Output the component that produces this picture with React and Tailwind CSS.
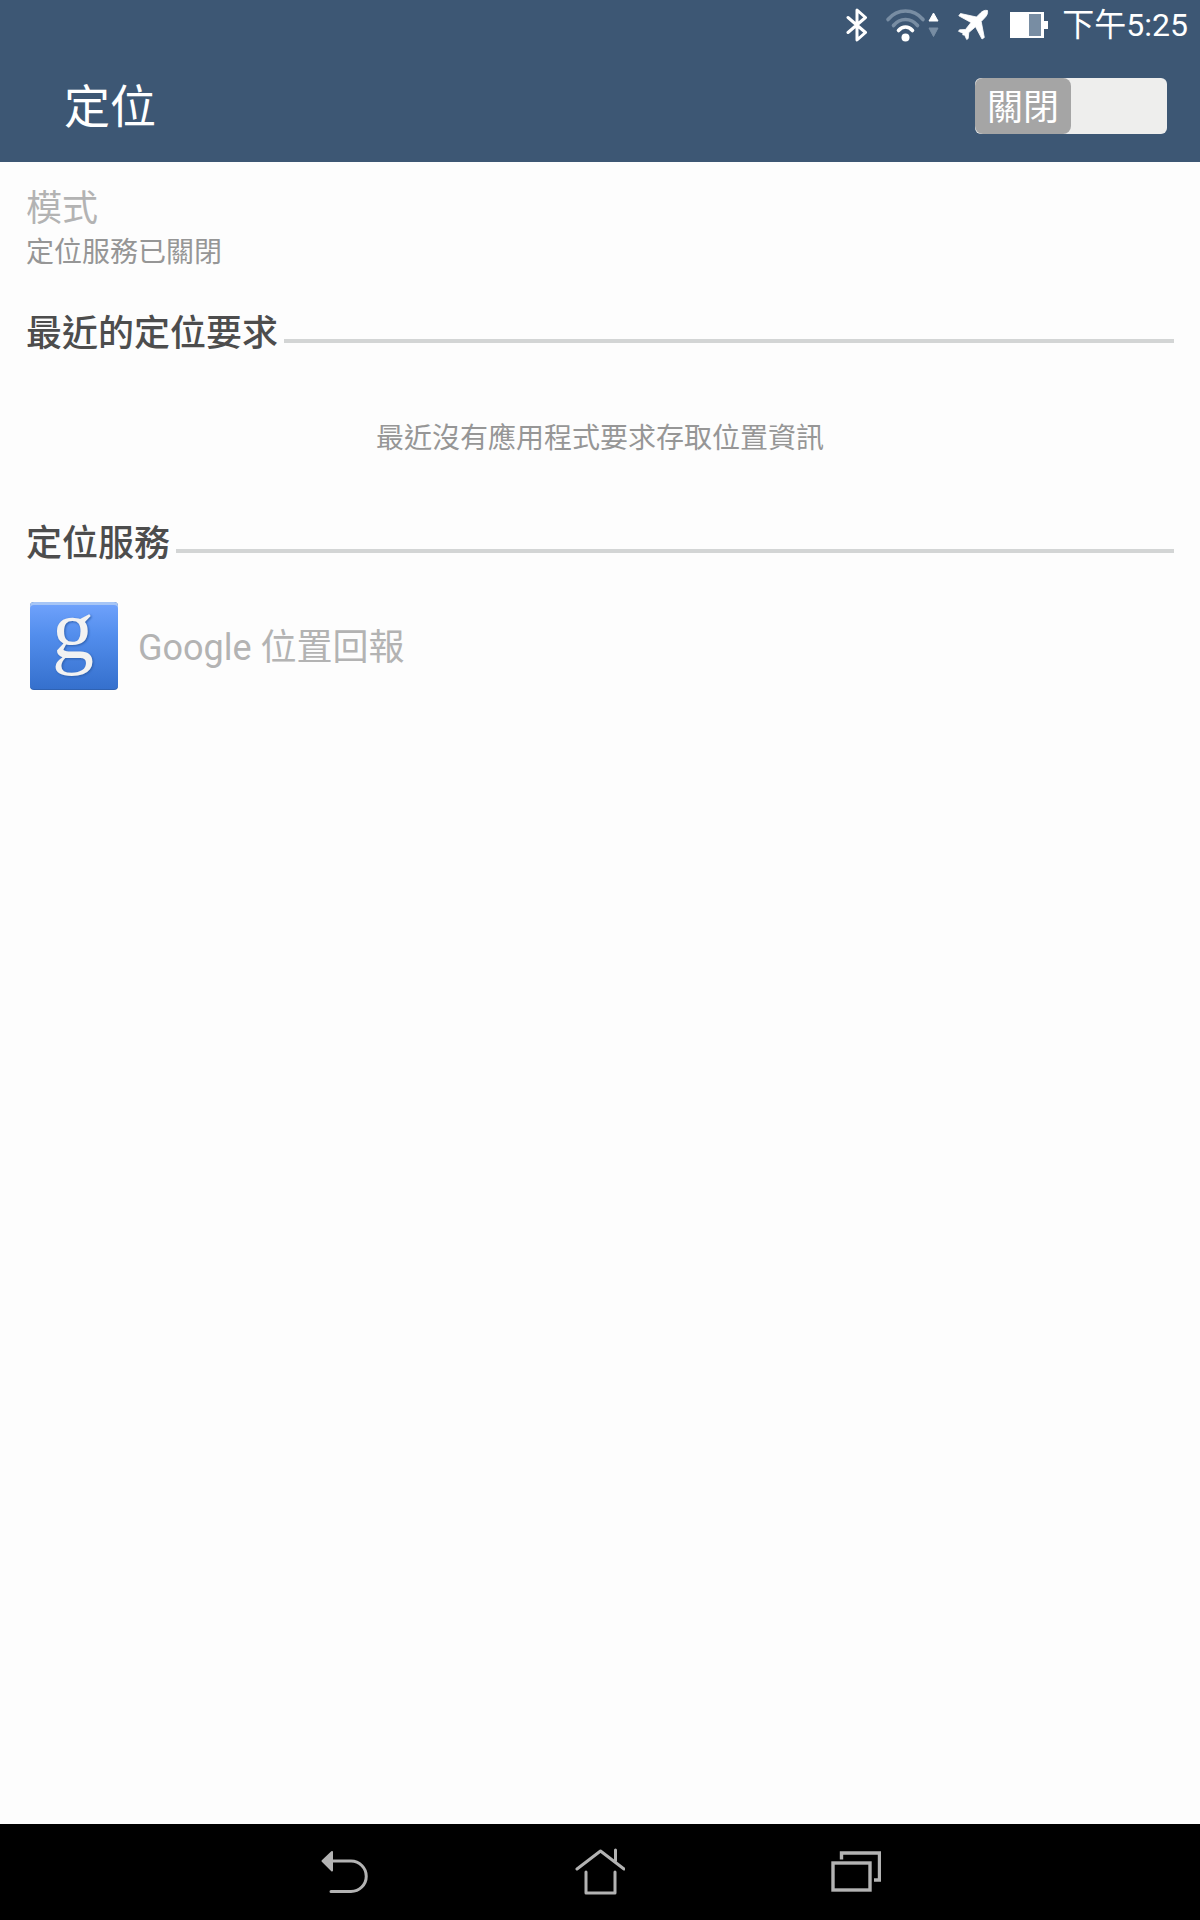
import React, { useState } from "react";

function BluetoothIcon() {
  return (
    <svg width="22" height="36" viewBox="0 0 22 36" fill="none" stroke="#fff" strokeWidth="3" strokeLinejoin="round" strokeLinecap="round" aria-hidden="true">
      <path d="M2 10.5 L19.5 25.5 L11 33 V3 L19.5 10.5 L2 25.5" />
    </svg>
  );
}

function WifiIcon() {
  return (
    <svg width="56" height="36" viewBox="0 0 56 36" fill="none" aria-hidden="true">
      <g strokeLinecap="round" strokeWidth="3.6">
        <path d="M3 12.5 C12.5 1.2 28.500 1.200 38 12.500" stroke="#788da3" />
        <path d="M8.500 18.500 C15 10.500 26 10.500 32.500 18.500" stroke="#788da3" />
        <path d="M13.500 23.500 C17.500 18.800 23.500 18.800 27.500 23.500" stroke="#fff" />
      </g>
      <circle cx="20.500" cy="30.500" r="4" fill="#fff" />
      <path d="M48.500 6 L53 14 H44 Z" fill="#fff" stroke="#fff" strokeWidth="1" strokeLinejoin="round" />
      <path d="M44 21 H53 L48.500 29.500 Z" fill="#788da3" stroke="#788da3" strokeWidth="1" strokeLinejoin="round" />
    </svg>
  );
}

function PlaneIcon() {
  return (
    <svg width="32" height="32" viewBox="0 0 32 32" fill="#fff" stroke="#fff" strokeWidth="0.8" strokeLinejoin="round" aria-hidden="true">
      <path d="M30.500 1.500 C28 0.800 25.500 2 23.500 4 L19.500 8 L3.500 4.500 L1.800 6.800 L14 13.500 L8.500 20.500 L2.500 20.800 L1.500 22.300 L6 24.200 L5.800 26 L7.600 26 L9.700 30.500 L11.200 29.500 L11.800 23.500 L18.500 17.800 L25 30 L27.300 28.500 L24.200 12.500 L28 8.500 C30 6.500 31 4 30.500 1.500 Z" />
    </svg>
  );
}

function BatteryIcon() {
  return (
    <svg width="38" height="26" viewBox="0 0 38 26" aria-hidden="true">
      <path d="M0 0 H34 V9 H38 V17 H34 V26 H0 Z" fill="#fff" />
      <rect x="19" y="2" width="12" height="22" fill="#788da3" />
    </svg>
  );
}

function GoogleIcon() {
  return (
    <svg width="88" height="88" viewBox="0 0 88 88" className="shrink-0 overflow-visible" aria-hidden="true">
      <defs>
        <linearGradient id="tile" x1="0" y1="0" x2="0" y2="1">
          <stop offset="0" stopColor="#6ea1fb" />
          <stop offset="0.35" stopColor="#538eed" />
          <stop offset="1" stopColor="#3570cd" />
        </linearGradient>
      </defs>
      <rect width="88" height="88" rx="4" fill="#2f62b2" />
      <rect width="88" height="86" rx="4" fill="#a6c5f6" />
      <rect y="3" width="88" height="84" rx="4" fill="url(#tile)" />
      <text x="43" y="56" textAnchor="middle" fontSize="84" fill="#f2f2f2" fontFamily="'Liberation Serif', serif" className="drop-shadow-[1px_1px_1px_#2d5fae]">g</text>
    </svg>
  );
}

function SectionHeader({ children }) {
  return (
    <div className="flex items-end gap-1.5">
      <h2 className="text-[36px] leading-[44px] font-medium text-[#4d4d4d]">{children}</h2>
      <div className="mb-[13px] h-1 flex-1 bg-[#d3d5d5]" />
    </div>
  );
}

function StatusBar() {
  return (
    <div className="flex h-[50px] items-center justify-end pr-3 text-white">
      <BluetoothIcon />
      <div className="ml-[17px]"><WifiIcon /></div>
      <div className="ml-4"><PlaneIcon /></div>
      <div className="ml-[21px]"><BatteryIcon /></div>
      <span className="ml-3.5 text-[32px] leading-[50px] font-normal">下午5:25</span>
    </div>
  );
}

function NavBar() {
  const button = "flex h-24 w-32 items-center justify-center";
  return (
    <nav className="flex h-24 items-center justify-center gap-32 bg-black">
      <button type="button" aria-label="返回" className={button}>
        <svg width="48" height="48" viewBox="0 0 48 48" fill="none" stroke="#b3b3b3" strokeWidth="3" strokeLinecap="round" aria-hidden="true">
          <path d="M11 13 H31 A15 15 0 0 1 31 43.500 H11" />
          <path d="M2.500 13 L12 4 V22.500 Z" fill="#b3b3b3" strokeWidth="2" strokeLinejoin="round" />
        </svg>
      </button>
      <button type="button" aria-label="主畫面" className={button}>
        <svg width="50" height="48" viewBox="0 0 50 48" fill="none" stroke="#b3b3b3" strokeWidth="3" strokeLinecap="round" strokeLinejoin="round" aria-hidden="true">
          <path d="M2 21 L25.500 3 L49 21 M40.500 13 V2 M11 24 V45 H40 V24" />
        </svg>
      </button>
      <button type="button" aria-label="最近使用的應用程式" className={button}>
        <svg width="50" height="48" viewBox="0 0 50 48" fill="none" stroke="#b3b3b3" strokeWidth="3.400" aria-hidden="true">
          <rect x="2" y="15" width="37" height="27" />
          <path d="M10.500 11.500 V5 H48.500 V32 H43" />
        </svg>
      </button>
    </nav>
  );
}

export default function App() {
  const [on, setOn] = useState(false);
  return (
    <div className="flex min-h-screen flex-col bg-[#fdfdfd] font-[Roboto,'Noto_Sans_CJK_TC',sans-serif]" lang="zh-Hant">
      <header className="bg-[#3d5774]">
        <StatusBar />
        <div className="flex h-28 items-center justify-between pr-[33px] pl-16">
          <h1 className="pt-0.5 text-[46px] leading-[60px] text-white">定位</h1>
          <button
            type="button"
            role="switch"
            aria-checked={on}
            aria-label="定位"
            onClick={() => setOn(!on)}
            className="flex h-14 w-48 rounded-md bg-[#eeeeed]"
          >
            <span className="flex h-14 w-24 items-center justify-center rounded-lg bg-[#a5a5a5] pt-1 text-[36px] leading-[44px] text-white">
              關閉
            </span>
          </button>
        </div>
      </header>

      <main className="flex-1 px-[26px] pt-[25px]">
        <section>
          <p className="text-[36px] leading-[44px] font-normal text-[#b3b3b3]">模式</p>
          <p className="text-[28px] leading-[44px] font-normal text-[#969696]">定位服務已關閉</p>
        </section>
        <section className="mt-[37px]">
          <SectionHeader>最近的定位要求</SectionHeader>
          <p className="py-[61px] text-center text-[28px] leading-[44px] font-normal text-[#969696]">
            最近沒有應用程式要求存取位置資訊
          </p>
        </section>
        <section>
          <SectionHeader>定位服務</SectionHeader>
          <div className="mt-9 flex items-center gap-5 pl-1">
            <GoogleIcon />
            <span className="pt-1 text-[36px] leading-[44px] font-normal text-[#b3b3b3]">Google 位置回報</span>
          </div>
        </section>
      </main>

      <NavBar />
    </div>
  );
}
